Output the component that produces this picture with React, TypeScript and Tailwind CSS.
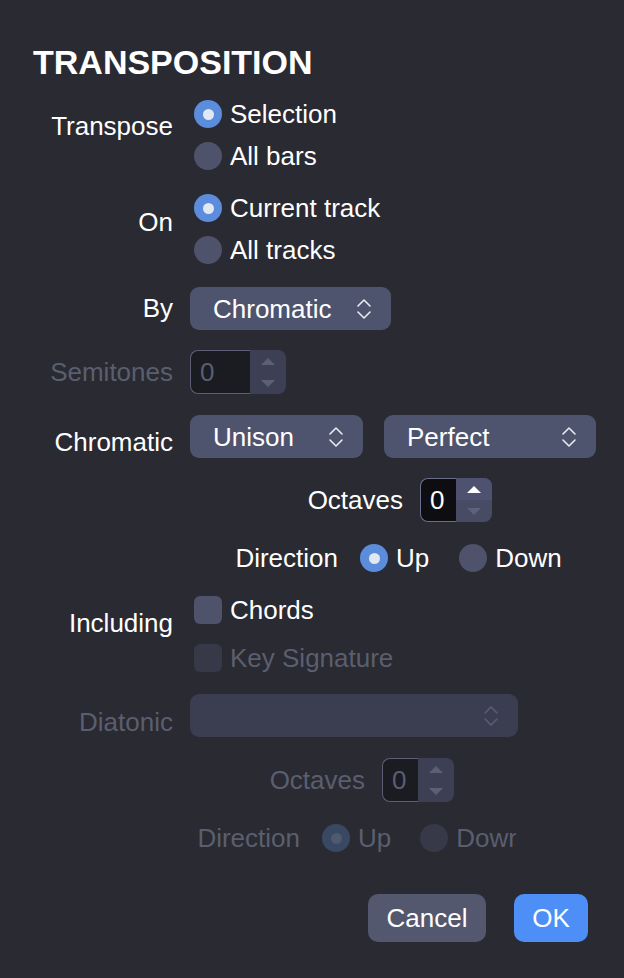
import React from 'react';

function UpDown({ dim }: { dim?: boolean }) {
  return (
    <svg width="16" height="24" viewBox="0 0 16 24" fill="none">
      <path
        d="M2 9 L8 3 L14 9 M2 15 L8 21 L14 15"
        stroke={dim ? '#5a5e74' : '#e8eaf0'}
        strokeWidth="1.6"
        strokeLinecap="round"
        strokeLinejoin="round"
      />
    </svg>
  );
}

function Radio({ checked, disabled, label, clip }: { checked?: boolean; disabled?: boolean; label: string; clip?: boolean }) {
  const circle = disabled
    ? checked
      ? 'bg-[#394863]'
      : 'bg-[#373949]'
    : checked
      ? 'bg-[#5b8ddc]'
      : 'bg-[#4e526a]';
  return (
    <div className="flex items-center h-[42px] gap-[8px]">
      <div className={`size-[28px] rounded-full flex items-center justify-center shrink-0 ${circle}`}>
        {checked && (
          <div className={`size-[11px] rounded-full ${disabled ? 'bg-[#4d5a70]' : 'bg-[#e3e8f0]'}`} />
        )}
      </div>
      <span
        className={`whitespace-nowrap ${disabled ? 'text-[#5b5e6f]' : 'text-white'} ${clip ? 'w-[60px] overflow-hidden' : ''}`}
      >
        {label}
      </span>
    </div>
  );
}

function Checkbox({ label, disabled }: { label: string; disabled?: boolean }) {
  return (
    <div className="flex items-center h-[42px] gap-[8px]">
      <div className={`size-[28px] rounded-[6px] shrink-0 ${disabled ? 'bg-[#373949]' : 'bg-[#4e526a]'}`} />
      <span className={disabled ? 'text-[#5b5e6f]' : 'text-white'}>{label}</span>
    </div>
  );
}

function Select({ value, width, disabled }: { value: string; width: string; disabled?: boolean }) {
  return (
    <div
      className={`h-[43px] rounded-[9px] flex items-center justify-between pl-[23px] pr-[19px] ${width} ${
        disabled ? 'bg-[#3b3d51]' : 'bg-[#4f546e]'
      }`}
    >
      <span className="text-white">{value}</span>
      <UpDown dim={disabled} />
    </div>
  );
}

function Stepper({ inputW, disabled, active }: { inputW: string; disabled?: boolean; active?: boolean }) {
  return (
    <div className="flex h-[44px]">
      <div
        className={`${inputW} h-full rounded-l-[8px] border-[1.5px] border-r-0 flex items-center pl-[9px] ${
          disabled ? 'bg-[#1b1b22] border-[#5c5e78] text-[#5b5e6f]' : 'bg-[#0e0e12] border-[#6b6e88] text-white'
        }`}
      >
        0
      </div>
      <div
        className={`w-[36px] h-full rounded-r-[8px] flex flex-col overflow-hidden ${
          disabled ? 'bg-[#3d4055]' : 'bg-[#474b63]'
        }`}
      >
        <div className={`flex-1 flex items-center justify-center ${active ? 'bg-[#4e5270]' : ''}`}>
          <svg width="16" height="9" viewBox="0 0 16 9">
            <path d="M1 8 L8 1 L15 8 Z" fill={active ? '#ffffff' : '#5c6076'} />
          </svg>
        </div>
        <div className="flex-1 flex items-center justify-center">
          <svg width="16" height="9" viewBox="0 0 16 9">
            <path d="M1 1 L8 8 L15 1 Z" fill={active ? '#5d6179' : '#5c6076'} />
          </svg>
        </div>
      </div>
    </div>
  );
}

function Label({ children, dim, shift = '', h = 'leading-[42px]' }: { children: React.ReactNode; dim?: boolean; shift?: string; h?: string }) {
  return (
    <div className={`w-[173px] shrink-0 text-right ${h} ${shift} ${dim ? 'text-[#5b5e6f]' : 'text-white'}`}>
      {children}
    </div>
  );
}

export default function App() {
  return (
    <div className="w-[624px] h-[978px] overflow-hidden bg-[#2a2a32] text-white text-[26px] leading-none font-['Liberation_Sans',Arial,sans-serif]">
      {/* Title */}
      <div className="pt-[42px] pl-[33px] text-[34px] font-bold leading-[40px]">TRANSPOSITION</div>

      {/* Transpose */}
      <div className="flex mt-[11px] gap-[17px]">
        <Label shift="translate-y-[12px]">Transpose</Label>
        <div className="flex flex-col pl-[4px]">
          <Radio checked label="Selection" />
          <Radio label="All bars" />
        </div>
      </div>

      {/* On */}
      <div className="flex mt-[10px] gap-[17px]">
        <Label shift="translate-y-[14px]">On</Label>
        <div className="flex flex-col pl-[4px]">
          <Radio checked label="Current track" />
          <Radio label="All tracks" />
        </div>
      </div>

      {/* By */}
      <div className="flex mt-[16px] gap-[17px]">
        <Label h="leading-[43px]">By</Label>
        <Select value="Chromatic" width="w-[201px]" />
      </div>

      {/* Semitones */}
      <div className="flex mt-[20px] gap-[17px]">
        <Label h="leading-[44px]" dim>Semitones</Label>
        <Stepper inputW="w-[60px]" disabled />
      </div>

      {/* Chromatic */}
      <div className="flex mt-[21px] gap-[17px]">
        <Label shift="translate-y-[6px]" h="leading-[43px]">Chromatic</Label>
        <div className="flex gap-[21px]">
          <Select value="Unison" width="w-[173px]" />
          <Select value="Perfect" width="w-[212px]" />
        </div>
      </div>

      {/* Octaves */}
      <div className="flex mt-[20px] gap-[17px]">
        <div className="w-[403px] text-right leading-[44px]">Octaves</div>
        <Stepper inputW="w-[36px]" active />
      </div>

      {/* Direction */}
      <div className="flex mt-[15px] items-center">
        <div className="w-[338px] text-right leading-[42px] mr-[22px]">Direction</div>
        <Radio checked label="Up" />
        <div className="w-[30px]" />
        <Radio label="Down" />
      </div>

      {/* Including */}
      <div className="flex mt-[10px] gap-[17px]">
        <Label shift="translate-y-[13px]">Including</Label>
        <div className="flex flex-col gap-[6px] pl-[4px]">
          <Checkbox label="Chords" />
          <Checkbox label="Key Signature" disabled />
        </div>
      </div>

      {/* Diatonic */}
      <div className="flex mt-[15px] gap-[17px]">
        <Label shift="translate-y-[7px]" h="leading-[43px]" dim>Diatonic</Label>
        <Select value="" width="w-[328px]" disabled />
      </div>

      {/* Octaves (disabled) */}
      <div className="flex mt-[21px] gap-[17px]">
        <div className="w-[365px] text-right leading-[44px] text-[#5b5e6f]">Octaves</div>
        <Stepper inputW="w-[36px]" disabled />
      </div>

      {/* Direction (disabled) */}
      <div className="flex mt-[15px] items-center">
        <div className="w-[300px] text-right leading-[42px] mr-[22px] text-[#5b5e6f]">Direction</div>
        <Radio checked disabled label="Up" />
        <div className="w-[29px]" />
        <Radio disabled label="Down" clip />
      </div>

      {/* Buttons */}
      <div className="flex justify-end gap-[28px] pr-[36px] mt-[35px]">
        <button className="h-[48px] w-[118px] rounded-[10px] bg-[#54586f] text-white">Cancel</button>
        <button className="h-[48px] w-[74px] rounded-[10px] bg-[#4d8ff6] text-white">OK</button>
      </div>
    </div>
  );
}
